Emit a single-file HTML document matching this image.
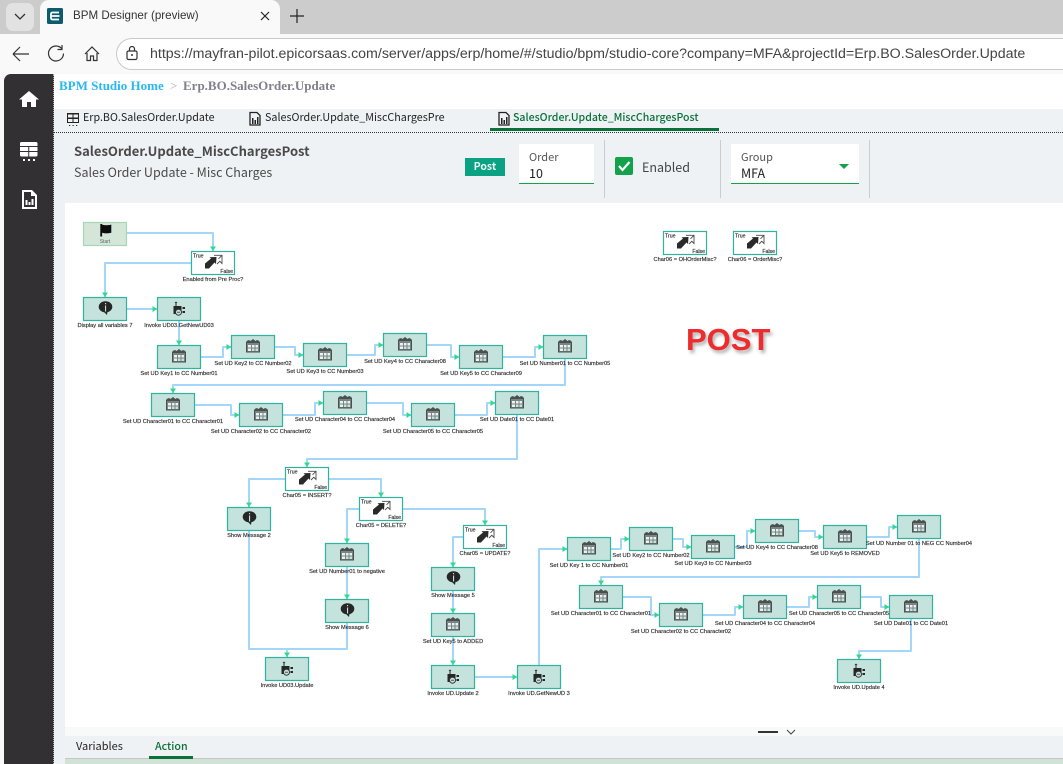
<!DOCTYPE html>
<html lang="en"><head><meta charset="utf-8"><title>BPM Designer (preview)</title>
<style>
html,body{margin:0;padding:0}
body{width:1063px;height:764px;overflow:hidden;position:relative;background:#f9f9f9;font-family:"Noto Sans CJK SC","Liberation Sans",sans-serif;color:#333}
.a{position:absolute;white-space:nowrap}
.ui{font-family:"Liberation Sans","DejaVu Sans",sans-serif}
svg{position:absolute;left:0;top:0;overflow:visible}
#flow{filter:blur(.3px)}
#flow text{font-family:"Liberation Sans",sans-serif;font-size:5.7px;fill:#2a2a2a;stroke:#2a2a2a;stroke-width:.14;text-anchor:middle}
#flow text.t{text-anchor:start;font-size:5.2px}
#flow text.f{text-anchor:end;font-size:5.2px}
#flow .w path{fill:none;stroke:#a4d6fb;stroke-width:2;marker-end:url(#ar);stroke-linejoin:round}
#flow path.n{marker-end:none!important}
</style></head><body>
<div class="a" style="left:0;top:0;width:1063px;height:34px;background:#ccc"></div>
<div class="a" style="left:6px;top:3px;width:28px;height:28px;background:#e2e2e2;border-radius:7px"></div>
<svg width="60" height="34"><path d="M15 14l5 5 5-5" fill="none" stroke="#333" stroke-width="1.3"/></svg>
<div class="a" style="left:40px;top:0;width:240px;height:34px;background:#f9f9f9;border-radius:9px 9px 0 0"></div>
<svg width="64" height="34"><rect x="47" y="8" width="16" height="16" rx="1.5" fill="#0d5c6e"/><path d="M59 12.500H52.500q-1.500 0-1.500 1.500v4q0 1.500 1.500 1.500H59M51.500 16H59.500" fill="none" stroke="#fff" stroke-width="1.800"/></svg>
<div class="a ui" style="left:73px;top:8px;font-size:11.600px;line-height:16px;color:#333">BPM Designer (preview)</div>
<svg width="310" height="34"><path d="M261 12l8 8M269 12l-8 8" stroke="#222" stroke-width="1.200"/><path d="M297 9v14M290 16h14" stroke="#222" stroke-width="1.200"/></svg>
<div class="a" style="left:116px;top:38px;width:1000px;height:30px;background:#fff;border:1px solid #c9c9c9;border-radius:16px"></div>
<svg width="150" height="74">
<path d="M13 54h16M13 54l7-7M13 54l7 7" fill="none" stroke="#333" stroke-width="1.200"/>
<path d="M62 49a7.500 7.500 0 1 0 1.500 4.500M62 45v4.500h-4.500" fill="none" stroke="#333" stroke-width="1.200"/>
<path d="M85 54l7-7 7 7M87 53v7.500h3.500v-4.500h3v4.500h3.500V53" fill="none" stroke="#333" stroke-width="1.200"/>
<rect x="127" y="51" width="10" height="8.500" rx="1.500" fill="none" stroke="#333" stroke-width="1.200"/><path d="M129.500 51v-2a2.500 2.500 0 0 1 5 0v2" fill="none" stroke="#333" stroke-width="1.200"/><circle cx="132" cy="55" r="1" fill="#333"/>
</svg>
<div class="a ui" style="left:150px;top:46px;font-size:14.200px;line-height:16px;color:#444">https://mayfran-pilot.epicorsaas.com/server/apps/erp/home/#/studio/bpm/studio-core?company=MFA&amp;projectId=Erp.BO.SalesOrder.Update</div>

<div class="a" style="left:4px;top:74px;width:50px;height:690px;background:#323032;border-radius:7px 0 0 0;border-right:1px dotted #aaa;box-sizing:border-box"></div>
<svg width="54" height="220" fill="#fff">
<path d="M29 91l-10 8.500h3V107h5v-5h4v5h5v-7.500h3z"/>
<rect x="20" y="142" width="17.500" height="14.500" rx="1.500"/><path d="M20 146.500h17.500M20 151.500h17.500M28.750 146.500v10" stroke="#323032" stroke-width="1" fill="none"/><path d="M23 159h2v2h-2zM28 159h2v2h-2zM33 159h2v2h-2z"/>
<path d="M22 190h10l5 5v14H22zM24 192v15h11v-11h-4v-4z" fill-rule="evenodd"/><path d="M25.500 200h2v5h-2zM28.500 202h2v3h-2zM31.500 199h2v6h-2z"/>
</svg>

<div class="a" style="left:54px;top:74px;width:1009px;height:35px;background:#fff"></div>
<div class="a" style="left:59px;top:78px;font:bold 13px/16px 'Liberation Serif',serif;color:#2ab7f2">BPM Studio Home</div>
<div class="a" style="left:170px;top:78px;font:13px/16px 'Liberation Serif',serif;color:#aaa">&gt;</div>
<div class="a" style="left:183px;top:78px;font:bold 13px/16px 'Liberation Serif',serif;color:#80808a">Erp.BO.SalesOrder.Update</div>

<div class="a" style="left:54px;top:109px;width:1009px;height:655px;background:#eef2f5"></div>
<div class="a" style="left:54px;top:132px;width:1009px;height:0;border-top:1px dotted #333"></div>
<svg width="520" height="132">
<path d="M67 113h12v10H67zM68 114.500v3h4.500v-3zM73.500 114.500v3H78v-3zM68 119v3h4.500v-3zM73.500 119v3H78v-3z" fill="#222" fill-rule="evenodd"/><path d="M69 125h1.200v1H69zM72.500 125h1.200v1h-1.200zM76 125h1.200v1H76z" fill="#222"/>
<path d="M250 112.500h7l3 3v9.500h-10z" fill="none" stroke="#222" stroke-width="1.300"/><path d="M252 118h1.500v6H252zM254.500 120h1.500v4h-1.500zM257 117h1.500v7H257z" fill="#222"/>
<path d="M499 112.500h7l3 3v9.500h-10z" fill="none" stroke="#222" stroke-width="1.300"/><path d="M501 118h1.500v6H501zM503.500 120h1.500v4h-1.500zM506 117h1.500v7H506z" fill="#222"/>
</svg>
<div class="a" style="left:83px;top:110px;font-size:10.700px;line-height:16px;color:#222">Erp.BO.SalesOrder.Update</div>
<div class="a" style="left:265px;top:110px;font-size:10.750px;line-height:16px;color:#222">SalesOrder.Update_MiscChargesPre</div>
<div class="a" style="left:513px;top:110px;font-size:10.550px;line-height:16px;font-weight:500;color:#0b7039">SalesOrder.Update_MiscChargesPost</div>
<div class="a" style="left:490px;top:128px;width:229px;height:3px;background:#0b7039"></div>

<div class="a" style="left:74px;top:141px;font-size:13px;line-height:20px;font-weight:700;color:#4a4a4a">SalesOrder.Update_MiscChargesPost</div>
<div class="a" style="left:74px;top:163px;font-size:12.500px;line-height:18px;color:#4a4a4a">Sales Order Update - Misc Charges</div>
<div class="a" style="left:465px;top:158px;width:40px;height:18px;background:#0aa283;color:#e8f7f3;font-size:10.500px;line-height:18px;font-weight:700;text-align:center">Post</div>
<div class="a" style="left:519px;top:144px;width:75px;height:40px;background:#fff;border-bottom:1px solid #12a24b;box-sizing:border-box"></div>
<div class="a" style="left:529px;top:149px;font-size:11px;line-height:16px;color:#555">Order</div>
<div class="a" style="left:529px;top:164px;font-size:12.500px;line-height:17px;color:#222">10</div>
<div class="a" style="left:604px;top:140px;width:1px;height:58px;background:#ccc"></div>
<div class="a" style="left:615px;top:157px;width:18px;height:18px;background:#12a24b;border-radius:2px"></div>
<svg width="640" height="180"><path d="M619 166l3.500 4 7-8" fill="none" stroke="#fff" stroke-width="2.200"/></svg>
<div class="a" style="left:642px;top:158px;font-size:12.500px;line-height:18px;color:#444">Enabled</div>
<div class="a" style="left:720px;top:140px;width:1px;height:58px;background:#ccc"></div>
<div class="a" style="left:731px;top:144px;width:128px;height:40px;background:#fff;border-bottom:1px solid #12a24b;box-sizing:border-box"></div>
<div class="a" style="left:741px;top:149px;font-size:11px;line-height:16px;color:#555">Group</div>
<div class="a" style="left:741px;top:164px;font-size:12.500px;line-height:17px;color:#222">MFA</div>
<svg width="860" height="180"><path d="M839 164h10l-5 5z" fill="#12a24b"/></svg>
<div class="a" style="left:869px;top:140px;width:1px;height:58px;background:#ccc"></div>

<div class="a" style="left:65px;top:203px;width:998px;height:524px;background:#fff"></div>
<div class="a" style="left:65px;top:727px;width:998px;height:9px;background:#f8f9f9"></div>
<div class="a" style="left:686px;top:322px;font:bold 31px/36px 'Liberation Sans',sans-serif;color:#ee2c2e;text-shadow:2px 3px 3px rgba(90,90,90,.45)">POST</div>

<svg id="flow" width="1063" height="764">
<defs>
<marker id="ar" markerUnits="userSpaceOnUse" markerWidth="6" markerHeight="6" refX="4.500" refY="3" orient="auto"><path d="M0 0L4.500 3 0 6z" fill="#2fd98c"/></marker>
<symbol id="cal" width="44" height="24" viewBox="0 0 44 24" overflow="visible">
<path d="M15.500 7.500h13v9.500h-13z" fill="#7a8583" stroke="#4a4f4f"/><path d="M15.500 7.500v-1.500l2.500-1 1.500 1 2.500-2 2.500 2 1.500-1 2.500 1v1.500z" fill="#4a4f4f"/><path d="M17 10h3v2.500h-3zM21 10h2.500v2.500H21zM24.500 10h2.500v2.500h-2.500zM17 13.500h3V16h-3z" fill="#eaf3f1"/><path d="M21 13.500h2.500V16H21zM24.500 13.500h2.500V16h-2.500z" fill="#c3e3dc"/>
</symbol>
<symbol id="msg" width="44" height="24" viewBox="0 0 44 24" overflow="visible">
<ellipse cx="22.500" cy="9.800" rx="6.800" ry="5.600" fill="#262626"/><path d="M20.500 14.500l3.500 3.500 .5-3.500z" fill="#262626"/><path d="M22 6h1.100v1.200H22zM22 8.500h1.100v6H22z" fill="#c3e3dc"/>
</symbol>
<symbol id="inv" width="44" height="24" viewBox="0 0 44 24" overflow="visible">
<path d="M16.500 9h8v8h-8z" fill="#262626"/><path d="M18.500 6h1v3h-1z" fill="#262626"/><path d="M17.500 6l1.500-1.500L20.500 6z" fill="#262626"/><path d="M25.500 10h2.500v2h-2.500zM25.500 14h2.500v2h-2.500z" fill="#262626"/><circle cx="21.500" cy="15.200" r="3" fill="#c3e3dc" stroke="#333" stroke-width="1"/><path d="M20 15.200h3" stroke="#333" stroke-width=".8"/>
</symbol>
<symbol id="dec" width="44" height="24" viewBox="0 0 44 24" overflow="visible">
<path d="M14 12.500L20 7.500 18.500 6.200 25.500 6 25 13 23.500 11.500 18 17.500H14z" fill="#2a2a2a"/><path d="M23 4.300H31V12.500L28.800 10.300 26 13M31 4.300L27.500 7.800" fill="none" stroke="#4a4a4a" stroke-width=".9"/>
</symbol>
<g id="b"><rect x=".5" y=".5" width="43" height="23" fill="#c3e3dc" stroke="#2fb39f" stroke-width="1.200"/></g>
<g id="bd"><rect x=".5" y=".5" width="43" height="23" fill="#fff" stroke="#2fb39f" stroke-width="1.200"/></g>
</defs>

<g class="w">
<path d="M127 233H213V251"/>
<path d="M191 263H105V297"/>
<path d="M127 309H157"/>
<path d="M179 321V345"/>
<path d="M201 357H223V347H231"/>
<path d="M275 347H295V355H303"/>
<path d="M347 355H375V345H383"/>
<path d="M427 345H451V357H459"/>
<path d="M503 357H535V347H543"/>
<path d="M565 359V385H173V393"/>
<path d="M195 405H231V415H239"/>
<path d="M283 415H315V403H323"/>
<path d="M367 403H403V415H411"/>
<path d="M455 415H487V403H495"/>
<path d="M517 415V459H307V467"/>
<path d="M285 479H249V507"/>
<path d="M329 479H381V497"/>
<path d="M249 531V649H287V657"/>
<path class="n" d="M347 623V649H287"/>
<path d="M359 509H347V543"/>
<path d="M347 567V599"/>
<path d="M403 509H485V525"/>
<path d="M463 537H453V567"/>
<path d="M453 591V613"/>
<path d="M453 637V665"/>
<path d="M475 677H517"/>
<path d="M539 665V549H567"/>
<path d="M611 549H621V539H629"/>
<path d="M673 539H683V547H691"/>
<path d="M735 547H747V531H755"/>
<path d="M799 531H815V537H823"/>
<path d="M867 537H889V527H897"/>
<path d="M919 539V577H601V585"/>
<path d="M623 597H651V615H659"/>
<path d="M703 615H735V607H743"/>
<path d="M787 607H809V597H817"/>
<path d="M861 597H881V607H889"/>
<path d="M911 619V651H859V659"/>
</g>

<rect x="83.500" y="222.500" width="43" height="23" fill="#d3e6d8" stroke="#a8d5b5" stroke-width="1.200"/>
<path d="M100.300 224h1.800v.6c3 .8 5.500 .8 9.200 0v8.200c-3.700 .8-6.200 .8-9.200 0v3.700h-1.800z" fill="#0c0c0c"/>
<text x="105" y="243" style="font-size:5px;fill:#666;stroke:none">Start</text>

<g transform="translate(191 251)"><use href="#bd"/><use href="#dec"/><text class="t" x="2" y="6.500">True</text><text class="f" x="42" y="22">False</text></g>
<g transform="translate(285 467)"><use href="#bd"/><use href="#dec"/><text class="t" x="2" y="6.500">True</text><text class="f" x="42" y="22">False</text></g>
<g transform="translate(359 497)"><use href="#bd"/><use href="#dec"/><text class="t" x="2" y="6.500">True</text><text class="f" x="42" y="22">False</text></g>
<g transform="translate(463 525)"><use href="#bd"/><use href="#dec"/><text class="t" x="2" y="6.500">True</text><text class="f" x="42" y="22">False</text></g>
<g transform="translate(663 231)"><use href="#bd"/><use href="#dec"/><text class="t" x="2" y="6.500">True</text><text class="f" x="42" y="22">False</text></g>
<g transform="translate(733 231)"><use href="#bd"/><use href="#dec"/><text class="t" x="2" y="6.500">True</text><text class="f" x="42" y="22">False</text></g>

<g transform="translate(83 297)"><use href="#b"/><use href="#msg"/></g>
<g transform="translate(227 507)"><use href="#b"/><use href="#msg"/></g>
<g transform="translate(325 599)"><use href="#b"/><use href="#msg"/></g>
<g transform="translate(431 567)"><use href="#b"/><use href="#msg"/></g>

<g transform="translate(157 297)"><use href="#b"/><use href="#inv"/></g>
<g transform="translate(265 657)"><use href="#b"/><use href="#inv"/></g>
<g transform="translate(431 665)"><use href="#b"/><use href="#inv"/></g>
<g transform="translate(517 665)"><use href="#b"/><use href="#inv"/></g>
<g transform="translate(837 659)"><use href="#b"/><use href="#inv"/></g>

<g transform="translate(157 345)"><use href="#b"/><use href="#cal"/></g>
<g transform="translate(231 335)"><use href="#b"/><use href="#cal"/></g>
<g transform="translate(303 343)"><use href="#b"/><use href="#cal"/></g>
<g transform="translate(383 333)"><use href="#b"/><use href="#cal"/></g>
<g transform="translate(459 345)"><use href="#b"/><use href="#cal"/></g>
<g transform="translate(543 335)"><use href="#b"/><use href="#cal"/></g>
<g transform="translate(151 393)"><use href="#b"/><use href="#cal"/></g>
<g transform="translate(239 403)"><use href="#b"/><use href="#cal"/></g>
<g transform="translate(323 391)"><use href="#b"/><use href="#cal"/></g>
<g transform="translate(411 403)"><use href="#b"/><use href="#cal"/></g>
<g transform="translate(495 391)"><use href="#b"/><use href="#cal"/></g>
<g transform="translate(325 543)"><use href="#b"/><use href="#cal"/></g>
<g transform="translate(431 613)"><use href="#b"/><use href="#cal"/></g>
<g transform="translate(567 537)"><use href="#b"/><use href="#cal"/></g>
<g transform="translate(629 527)"><use href="#b"/><use href="#cal"/></g>
<g transform="translate(691 535)"><use href="#b"/><use href="#cal"/></g>
<g transform="translate(755 519)"><use href="#b"/><use href="#cal"/></g>
<g transform="translate(823 525)"><use href="#b"/><use href="#cal"/></g>
<g transform="translate(897 515)"><use href="#b"/><use href="#cal"/></g>
<g transform="translate(579 585)"><use href="#b"/><use href="#cal"/></g>
<g transform="translate(659 603)"><use href="#b"/><use href="#cal"/></g>
<g transform="translate(743 595)"><use href="#b"/><use href="#cal"/></g>
<g transform="translate(817 585)"><use href="#b"/><use href="#cal"/></g>
<g transform="translate(889 595)"><use href="#b"/><use href="#cal"/></g>

<text x="213" y="281">Enabled from Pre Proc?</text>
<text x="105" y="327">Display all variables 7</text>
<text x="179" y="327">Invoke UD03.GetNewUD03</text>
<text x="179" y="375">Set UD Key1 to CC Number01</text>
<text x="253" y="365">Set UD Key2 to CC Number02</text>
<text x="325" y="373">Set UD Key3 to CC Number03</text>
<text x="405" y="363">Set UD Key4 to CC Character08</text>
<text x="481" y="375">Set UD Key5 to CC Character09</text>
<text x="565" y="365">Set UD Number01 to CC Number05</text>
<text x="173" y="423">Set UD Character01 to CC Character01</text>
<text x="261" y="433">Set UD Character02 to CC Character02</text>
<text x="345" y="421">Set UD Character04 to CC Character04</text>
<text x="433" y="433">Set UD Character05 to CC Character05</text>
<text x="517" y="421">Set UD Date01 to CC Date01</text>
<text x="307" y="497">Char05 = INSERT?</text>
<text x="249" y="537">Show Message 2</text>
<text x="381" y="527">Char05 = DELETE?</text>
<text x="347" y="573">Set UD Number01 to negative</text>
<text x="347" y="629">Show Message 6</text>
<text x="287" y="687">Invoke UD03.Update</text>
<text x="485" y="555">Char05 = UPDATE?</text>
<text x="453" y="597">Show Message 5</text>
<text x="453" y="643">Set UD Key5 to ADDED</text>
<text x="453" y="695">Invoke UD.Update 2</text>
<text x="539" y="695">Invoke UD.GetNewUD 3</text>
<text x="589" y="567">Set UD Key 1 to CC Number01</text>
<text x="651" y="557">Set UD Key2 to CC Number02</text>
<text x="713" y="565">Set UD Key3 to CC Number03</text>
<text x="777" y="549">Set UD Key4 to CC Character08</text>
<text x="845" y="555">Set UD Key5 to REMOVED</text>
<text x="919" y="545">Set UD Number 01 to NEG CC Number04</text>
<text x="601" y="615">Set UD Character01 to CC Character01</text>
<text x="681" y="633">Set UD Character02 to CC Character02</text>
<text x="765" y="625">Set UD Character04 to CC Character04</text>
<text x="839" y="615">Set UD Character05 to CC Character05</text>
<text x="911" y="625">Set UD Date01 to CC Date01</text>
<text x="859" y="689">Invoke UD.Update 4</text>
<text x="685" y="261">Char06 = OHOrderMisc?</text>
<text x="755" y="261">Char06 = OrderMisc?</text>
</svg>

<div class="a" style="left:758px;top:731px;width:20px;height:2px;background:#333"></div>
<svg width="800" height="740"><path d="M787 730l4 4 4-4" fill="none" stroke="#444" stroke-width="1"/></svg>

<div class="a" style="left:76px;top:738px;font-size:11px;line-height:17px;color:#222">Variables</div>
<div class="a" style="left:155px;top:738px;font-size:10.700px;line-height:17px;font-weight:500;color:#0b7039">Action</div>
<div class="a" style="left:149px;top:756px;width:44px;height:3px;background:#0b7039;z-index:2"></div>
<div class="a" style="left:65px;top:758px;width:998px;height:1px;background:#c6c6c6"></div>
<div class="a" style="left:65px;top:759px;width:998px;height:5px;background:#d1e3d6"></div>
</body></html>
